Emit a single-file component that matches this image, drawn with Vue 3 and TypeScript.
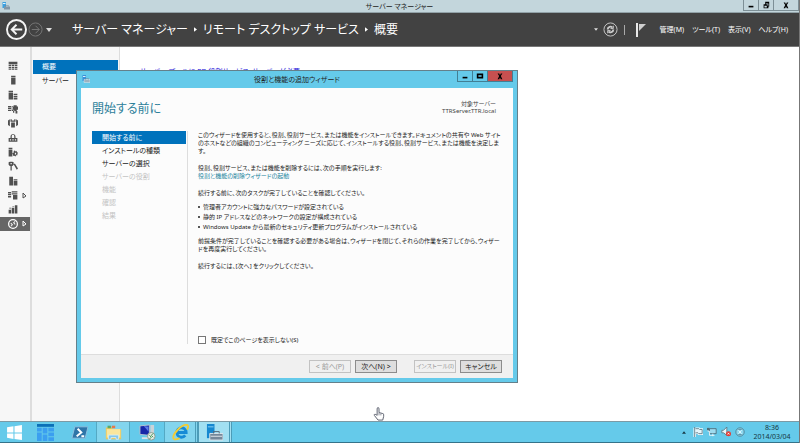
<script setup lang="ts">
import { ref } from 'vue'

interface RailItem {
  label: string
  path: string
  more?: boolean
  active?: boolean
}

const rail: RailItem[] = [
  { label: 'ダッシュボード', path: 'M1 1h14v4H1z M1 6h4v2H1z M6 6h4v2H6z M11 6h4v2h-4z M1 9h4v2H1z M6 9h4v2H6z M11 9h4v2h-4z M1 12h4v2H1z M6 12h4v2H6z M11 12h4v2h-4z' },
  { label: 'ローカル サーバー', path: 'M5 1h7v2H5z M5 4h7v11H5z' },
  { label: 'すべてのサーバー', path: 'M1 1h7v2H1z M1 4h7v11H1z M9 6h6v2H9z M9 9h6v2H9z M9 12h6v3H9z' },
  { label: 'AD CS', path: 'M0 3h5v2H0z M0 6h5v2H0z M0 9h5v2H0z M6 3h2v8H6z M9 2h5v2h2v5h-2v2H9V9H7V4h2z M8 10h2v4H8z M12 11h3v4h-3z' },
  { label: 'AD DS', path: 'M0 4l3-2v11l-3-2z M16 4l-3-2v11l3-2z M4 2h2v2h4V2h2v4H4z M5 7h6v8H5z' },
  { label: 'DHCP', path: 'M4 6c0-6 8-6 8 0v2h3v6H1V8h3z M6 5v3h4V5c0-3-4-3-4 0z M3 10v2h2v-2z M7 10v2h2v-2z M11 10v2h2v-2z' },
  { label: 'DNS', path: 'M1 1h6v2H1z M1 4h6v11H1z M11 5l1 2 2-1 0 2 2 1-1 2 0 2-2 0-1 2-2-1-2 0 0-2-1-2 2-1 0-2z M11 9v3h2V9z' },
  { label: 'IIS', path: 'M1 2l2-1h4l2 1v4L7 8H6v7H4V8H3L1 6z M4 3v2h2V3z M9 5l2-1 5 8-2 2z' },
  { label: 'WSUS', path: 'M2 1h6v14H2z M9 5h6v2H9z M9 8h6v7H9z' },
  { label: 'ファイル サービスと記憶域サービス', path: 'M0 3h5v2H0z M0 6h5v2H0z M0 9h5v3H0z M6 2h9v2H6z M6 5h9v2H6z M8 8h7v7H8z', more: true },
  { label: '印刷サービス', path: 'M1 9h4v6H1z M6 6h4v9H6z M11 2h4v13h-4z M7 3h3v1H7z M2 6h3v1H2z' },
  { label: 'リモート デスクトップ サービス', path: 'M8 0a8 8 0 1 0 0 16A8 8 0 0 0 8 0z M8 2a6 6 0 1 1 0 12A6 6 0 0 1 8 2z M5 6l3 3-3 3-1-1 2-2-2-2z M11 3L8 6l3 3 1-1-2-2 2-2z', more: true, active: true },
]

const steps = [
  { label: '開始する前に', state: 'active' },
  { label: 'インストールの種類', state: 'open' },
  { label: 'サーバーの選択', state: 'open' },
  { label: 'サーバーの役割', state: 'locked' },
  { label: '機能', state: 'locked' },
  { label: '確認', state: 'locked' },
  { label: '結果', state: 'locked' },
]

const menus = ['管理(M)', 'ツール(T)', '表示(V)', 'ヘルプ(H)']
const skipPage = ref(false)
</script>

<template>
  <div class="desktop">
    <header class="titlebar">
      <svg class="app-icon" viewBox="0 0 16 16"><path d="M1 0h7v12H1z" fill="#3aa0e0" /><path d="M2 2h5v2H2z" fill="#d8f0ff" /><path d="M4 9h12v6H4z" fill="#8296a6" /><path d="M7 9V7h6v2" fill="none" stroke="#708494" /></svg>
      <span class="app-title">サーバー マネージャー</span>
      <div class="win-buttons">
        <button type="button" aria-label="最小化"><svg viewBox="0 0 10 10"><path d="M2 6h6v2H2z" /></svg></button>
        <button type="button" aria-label="元に戻す"><svg viewBox="0 0 10 10"><path d="M4 1h5v6H8v2H2V4h2zM5 3v1h2v2h1V3zM3 6v2h3V6z" fill-rule="evenodd" /></svg></button>
        <button type="button" class="wide" aria-label="閉じる"><svg viewBox="0 0 10 10"><path d="M2 2h2l1 2 1-2h2L6 5l2 4H6L5 7 4 9H2l2-4z" /></svg></button>
      </div>
    </header>

    <nav class="banner">
      <button type="button" class="plain" aria-label="戻る"><svg class="back" viewBox="0 0 22 22"><circle cx="11" cy="11" r="10" /><path d="M17 11H6M11 6l-5 5 5 5" /></svg></button>
      <button type="button" class="plain" aria-label="進む"><svg class="forward" viewBox="0 0 16 16"><circle cx="8" cy="8" r="7" /><path d="M4 8h8M8 4l4 4-4 4" /></svg></button>
      <svg class="caret" viewBox="0 0 6 4"><path d="M0 0h6L3 4z" /></svg>
      <h1 class="crumbs">
        <span>サーバー マネージャー</span><svg viewBox="0 0 4 6"><path d="M0 0l4 3-4 3z" /></svg>
        <span>リモート デスクトップ サービス</span><svg viewBox="0 0 4 6"><path d="M0 0l4 3-4 3z" /></svg>
        <span>概要</span>
      </h1>
      <svg class="caret small" viewBox="0 0 6 4"><path d="M0 0h6L3 4z" /></svg>
      <button type="button" class="plain" aria-label="更新"><svg class="refresh" viewBox="0 0 16 16"><circle cx="8" cy="8" r="7" /><path d="M5 8c0-3 4-4 5-2M11 8c0 3-4 4-5 2" stroke-width="2" /><path d="M11 4v3H8M5 12V9h3" /></svg></button>
      <span class="bar"></span>
      <button type="button" class="plain" aria-label="通知"><svg class="flag" viewBox="0 0 10 14"><path d="M0 0h2v14H0z" fill="#e8e8e8" /><path d="M3 1h7L7 4 3 8z" fill="#cfcfcf" /></svg></button>
      <div class="menus"><button v-for="m in menus" :key="m" type="button" class="plain">{{ m }}</button></div>
    </nav>

    <main class="body">
      <nav class="rail">
        <a v-for="item in rail" :key="item.label" href="#" :aria-label="item.label" :class="{ active: item.active }">
          <svg class="rail-icon" viewBox="0 0 16 16"><path :d="item.path" fill-rule="evenodd" /></svg>
          <svg v-if="item.more" class="more" viewBox="0 0 5 7"><path d="M1 1l3 3-3 2z" /></svg>
        </a>
      </nav>
      <nav class="side">
        <a href="#" class="active">概要</a>
        <a href="#">サーバー</a>
      </nav>
      <section class="content"><p class="notice">サーバー プールに RD 役割サービス、サーバーが必要</p></section>
    </main>

    <section class="dialog" role="dialog" aria-labelledby="wizard-title">
      <header class="dialog-bar">
        <svg class="app-icon" viewBox="0 0 16 16"><path d="M1 0h7v12H1z" fill="#3a90d8" /><path d="M2 2h5v2H2z" fill="#d8f0ff" /><path d="M4 9h12v6H4z" fill="#9eb2c0" stroke="#dfeaf0" /><path d="M7 9V7h6v2" fill="none" stroke="#708494" /></svg>
        <h2 id="wizard-title">役割と機能の追加ウィザード</h2>
        <div class="win-buttons">
          <button type="button" aria-label="最小化"><svg viewBox="0 0 10 10"><path d="M2 6h6v2H2z" /></svg></button>
          <button type="button" aria-label="最大化"><svg viewBox="0 0 10 10"><path d="M1 2h8v6H1zM3 4v2h4V4z" fill-rule="evenodd" /></svg></button>
          <button type="button" class="wide close" aria-label="閉じる"><svg viewBox="0 0 10 10"><path d="M2 2h2l1 2 1-2h2L6 5l2 4H6L5 7 4 9H2l2-4z" /></svg></button>
        </div>
      </header>
      <div class="page">
        <div class="page-head">
          <h3>開始する前に</h3>
          <p>対象サーバー<br />TTRServer.TTR.local</p>
        </div>
        <div class="page-body">
          <ol class="steps"><li v-for="s in steps" :key="s.label" :class="s.state">{{ s.label }}</li></ol>
          <div class="text">
            <p>このウィザードを使用すると、役割、役割サービス、または機能をインストールできます。ドキュメントの共有や Web サイト<br />のホストなどの組織のコンピューティング ニーズに応じて、インストールする役割、役割サービス、または機能を決定しま<br />す。</p>
            <p>役割、役割サービス、または機能を削除するには、次の手順を実行します:<br /><a href="#">役割と機能の削除ウィザードの起動</a></p>
            <p>続行する前に、次のタスクが完了していることを確認してください。</p>
            <ul>
              <li>管理者アカウントに強力なパスワードが設定されている</li>
              <li>静的 IP アドレスなどのネットワークの設定が構成されている</li>
              <li>Windows Update から最新のセキュリティ更新プログラムがインストールされている</li>
            </ul>
            <p>前提条件が完了していることを確認する必要がある場合は、ウィザードを閉じて、それらの作業を完了してから、ウィザー<br />ドを再度実行してください。</p>
            <p>続行するには、[次へ] をクリックしてください。</p>
            <label class="skip"><input v-model="skipPage" type="checkbox" />既定でこのページを表示しない(S)</label>
          </div>
        </div>
      </div>
      <footer class="actions">
        <button type="button" disabled>&lt; 前へ(P)</button>
        <button type="button">次へ(N) &gt;</button>
        <button type="button" class="apart" disabled>インストール(I)</button>
        <button type="button">キャンセル</button>
      </footer>
    </section>

    <svg class="pointer" viewBox="0 0 12 15"><path d="M4 9V2c0-2 2-2 2 0v4l4 1c1 0 1 1 1 3l-1 4H5L1 9c-1-1 1-2 3 0z" fill="#fff" stroke="#555a68" /><path d="M8 7v2M6 6v3" stroke="#8a8e9a" /></svg>

    <footer class="taskbar">
      <button type="button" class="task start" aria-label="スタート"><svg viewBox="0 0 16 16"><path d="M1 3l6-1v6H1zM8 2l7-1v7H8zM1 9h6v5l-6-1zM8 9h7v6l-7-1z" fill="#fff" /></svg></button>
      <button type="button" class="task" aria-label="サーバー マネージャー"><svg viewBox="0 0 18 18"><path d="M0 0h18v3H0z" fill="#0b70b8" /><path d="M0 4h5v4H0zM6 4h5v6H6zM12 4h6v4h-6zM0 9h5v9H0zM6 11h5v7H6zM12 9h6v4h-6zM12 14h6v4h-6z" fill="#3b9ff0" /></svg></button>
      <button type="button" class="task" aria-label="PowerShell"><svg viewBox="0 0 18 18"><path d="M4 3h14l-3 12H1z" fill="#2e75a8" stroke="#8fc2e0" /><path d="M7 5l4 4-5 4M11 13h3" fill="none" stroke="#fff" stroke-width="2" /></svg></button>
      <button type="button" class="task running" aria-label="エクスプローラー"><svg viewBox="0 0 20 18"><path d="M1 3h7l1 2h10v12H1z" fill="#e9c75c" /><path d="M3 1h4v3H3z" fill="#5aaa6a" /><path d="M8 1h4v3H8z" fill="#e27a4a" /><path d="M2 5h16v10H2z" fill="#fae69c" /><path d="M4 17v-5h12v5h-3v-2H7v2z" fill="#84c8ec" stroke="#d7eef8" /></svg></button>
      <button type="button" class="task" aria-label="リモート デスクトップ"><svg viewBox="0 0 18 18"><path d="M1 2l10-1v11L1 11z" fill="#1727a8" stroke="#b9c4cf" /><path d="M5 2l5 1v5z" fill="#5a7be8" /><path d="M12 1h4v13h-4z" fill="#cbd3d8" /><path d="M3 14h8v2H3z" fill="#dbe3e8" /><circle cx="13" cy="13" r="4" fill="#e4ebe6" stroke="#8b9c92" /><path d="M11 12l2 2-2 2M15 10l-2 2 2 2" fill="none" stroke="#3c9350" /></svg></button>
      <button type="button" class="task running stacked" aria-label="Internet Explorer"><svg viewBox="0 0 18 18"><path d="M14 12a5 5 0 1 1 1-3H5" fill="none" stroke="#168bd6" stroke-width="3" /><path d="M2 16C-1 12 10 0 16 1c2 1 1 3 0 5" fill="none" stroke="#f2cc36" stroke-width="2" /><path d="M2 16c2 1 4 0 6-1" fill="none" stroke="#f2cc36" stroke-width="2" /></svg></button>
      <button type="button" class="task current stacked" aria-label="追加ウィザード"><svg viewBox="0 0 18 18"><path d="M1 0h8v15H1z" fill="#1688d0" /><path d="M2 3h6" stroke="#8ad0f4" /><path d="M4 10h14v7H4z" fill="#75889a" stroke="#dfe9ee" /><path d="M8 10V8h6v2" fill="none" stroke="#566878" /><path d="M5 13h12" stroke="#e1e8ed" /></svg></button>
      <div class="tray">
        <svg class="up" viewBox="0 0 6 4"><path d="M0 4h6L3 0z" fill="#173844" /></svg>
        <svg viewBox="0 0 12 12"><path d="M2 1v11M3 2h4l1 1h3v5H7L6 7H3" fill="none" stroke="#eefaff" stroke-width="3" /><path d="M2 0v12M3 2h4l1 1h3v5H7L6 7H3" fill="#e4f6fb" stroke="#58737f" /></svg>
        <svg viewBox="0 0 12 12"><path d="M3 2h8v6H3z" fill="#9edcf0" stroke="#496674" /><path d="M1 1v4h2v5h6M7 8v3" fill="none" stroke="#f0fbff" /><path d="M0 1h3v3H0z" fill="#526d78" /></svg>
        <svg viewBox="0 0 12 12"><path d="M1 4h2l4-4v10L3 7H1z" fill="#e9f7fb" stroke="#58737f" /><circle cx="9" cy="8" r="3" fill="#e23d35" /><path d="M8 7l2 2M10 7L8 9" stroke="#fff" /></svg>
        <svg viewBox="0 0 12 12"><circle cx="6" cy="6" r="5" fill="#8cd8ef" stroke="#48788a" /><path d="M4 4l4 4M8 4L4 8" stroke="#eafaff" /><path d="M4 3h4M4 9h4" stroke="#5b8798" /></svg>
      </div>
      <time class="clock">8:36<br />2014/03/04</time>
    </footer>
  </div>
</template>

<style>
body {
  margin: 0;
}
</style>

<style scoped>
* {
  box-sizing: border-box;
}
.desktop {
  position: relative;
  display: flex;
  flex-direction: column;
  min-height: 100vh;
  overflow: hidden;
  border-right: 1px solid #777;
  background: #fff;
  color: #222;
  font-family: "Noto Sans", "Noto Sans CJK JP", sans-serif;
  font-feature-settings: "palt";
  font-size: 7px;
  line-height: 8px;
}
h1, h2, h3, p, ol, ul {
  margin: 0;
  padding: 0;
  font-weight: 400;
}
ol {
  list-style: none;
}
svg {
  display: block;
  flex: none;
}
a {
  color: inherit;
  text-decoration: none;
}
button {
  margin: 0;
  padding: 0;
  border: 0;
  background: none;
  color: inherit;
  font: inherit;
  font-feature-settings: inherit;
  white-space: nowrap;
}
.titlebar {
  display: grid;
  grid-template-columns: 1fr auto 1fr;
  height: 13px;
  border-bottom: 1px solid #92a2a8;
  background: #c3d6dc;
}
.app-icon {
  width: 8px;
  height: 8px;
  margin: 2px;
}
.app-title {
  line-height: 13px;
}
.win-buttons {
  display: flex;
  justify-self: end;
  height: 11px;
  border: 1px solid #7d8f96;
  border-top: 0;
}
.win-buttons button {
  display: grid;
  place-items: center;
  width: 15px;
  border-right: 1px solid #7d8f96;
}
.win-buttons .wide {
  width: 24px;
  border-right: 0;
}
.win-buttons svg {
  width: 8px;
  height: 8px;
}
.banner {
  display: flex;
  align-items: center;
  height: 34px;
  padding: 0 11px 0 6px;
  border-bottom: 1px solid #777;
  background: #424242;
  color: #fff;
}
.banner svg {
  fill: none;
  stroke: #ddd;
}
.banner .back {
  width: 21px;
  height: 21px;
  stroke: #f4f4f4;
  stroke-width: 2;
}
.banner .forward {
  width: 15px;
  height: 15px;
  margin-left: 1px;
  stroke: #777;
}
.banner .caret {
  width: 6px;
  height: 4px;
  margin-left: 3px;
  fill: #ddd;
  stroke: none;
}
.banner .caret.small {
  width: 4px;
  height: 3px;
  margin: 0 5px 0 auto;
}
.crumbs {
  display: flex;
  align-items: center;
  gap: 6px;
  margin-left: 20px;
  font-size: 12px;
  line-height: 20px;
  white-space: nowrap;
}
.banner .crumbs svg {
  width: 3px;
  height: 5px;
  fill: #fff;
  stroke: none;
}
.banner .refresh {
  width: 15px;
  height: 15px;
  stroke: #ccc;
}
.bar {
  width: 1px;
  height: 10px;
  margin: 0 11px 0 6px;
  background: #aaa;
}
.banner .flag {
  width: 10px;
  height: 14px;
  stroke: none;
}
.menus {
  display: flex;
  gap: 8px;
  margin-left: 14px;
}
.body {
  display: flex;
  flex: 1;
  background: linear-gradient(90deg, #f7f7f7 119px, #ddd 119px, #ddd 120px, #fff 120px);
}
.rail {
  display: grid;
  grid-template-rows: repeat(12, 1fr);
  width: 30px;
  height: 172px;
  margin-top: 12px;
  color: #505050;
}
.rail a {
  display: flex;
  align-items: center;
  gap: 4px;
  padding-left: 8px;
}
.rail a.active {
  background: #666;
  color: #fff;
}
.rail-icon {
  width: 10px;
  height: 10px;
  fill: currentColor;
}
.more {
  width: 5px;
  height: 7px;
  fill: none;
  stroke: currentColor;
}
.side {
  width: 90px;
  padding: 13px 2px 0 1px;
  border-left: 2px solid #ddd;
}
.side a {
  display: block;
  padding-left: 9px;
  line-height: 14px;
}
.side .active,
.steps .active {
  background: #0072bc;
  color: #fff;
}
.content {
  flex: 1;
  padding: 19px 20px 0;
}
.notice {
  height: 4px;
  overflow: hidden;
  color: #1a10d8;
  line-height: 12px;
}
.dialog {
  position: absolute;
  top: 70px;
  left: 76px;
  display: flex;
  flex-direction: column;
  width: 442px;
  padding: 0 4px 4px;
  border: 1px solid #64808b;
  background: #65caea;
}
.dialog-bar {
  display: grid;
  grid-template-columns: 1fr auto 1fr;
  height: 17px;
}
.dialog-bar .app-icon {
  margin: 4px 0 0 1px;
}
.dialog-bar h2 {
  font-size: 7px;
  line-height: 17px;
}
.dialog-bar .win-buttons {
  border-color: #427f94;
}
.dialog-bar .win-buttons button {
  border-color: #427f94;
}
.dialog-bar .close {
  background: #c75050;
}
.page {
  background: #fcfcfc;
}
.page-head {
  display: flex;
  justify-content: space-between;
  align-items: flex-start;
  height: 43px;
  padding: 13px 17px 0 11px;
}
.page-head h3 {
  color: #2c809a;
  font-size: 12px;
  line-height: 16px;
}
.page-head p {
  color: #444;
  font-size: 6px;
  line-height: 7px;
  text-align: right;
}
.page-body {
  display: flex;
  padding: 0 8px 10px 11px;
}
.steps {
  width: 96px;
  padding-right: 1px;
  border-right: 1px solid #ddd;
}
.steps li {
  padding-left: 10px;
  line-height: 13px;
}
.steps .locked {
  color: #c4c4c4;
}
.text {
  flex: 1;
  padding-left: 10px;
  white-space: nowrap;
  font-size: 6px;
}
.text p + p {
  margin-top: 9px;
}
.text a {
  color: #21839c;
}
.text ul {
  margin: 5px 0;
  padding-left: 5px;
  line-height: 10px;
}
.text li {
  list-style: none;
}
.text li::before {
  content: "";
  float: left;
  width: 2px;
  height: 2px;
  margin: 4px 0 0 -5px;
  border-radius: 1px;
  background: #222;
}
.skip {
  display: flex;
  align-items: center;
  gap: 5px;
  margin-top: 66px;
}
.skip input {
  appearance: none;
  width: 8px;
  height: 8px;
  margin: 0;
  border: 1px solid #777;
  background: #fff;
}
.actions {
  display: flex;
  justify-content: flex-end;
  align-items: center;
  gap: 4px;
  height: 24px;
  padding-right: 11px;
  border-top: 1px solid #ddd;
  background: #f0f0f0;
}
.actions button {
  width: 42px;
  height: 13px;
  border: 1px solid #8c8c8c;
  background: #dedede;
  line-height: 11px;
}
.actions button:disabled {
  border-color: #c2c2c2;
  background: #f0f0f0;
  color: #999;
}
.actions .apart {
  margin-left: 13px;
  font-size: 6px;
}
.pointer {
  position: absolute;
  top: 407px;
  left: 373px;
  width: 12px;
  height: 14px;
}
.taskbar {
  display: flex;
  height: 22px;
  border-top: 1px solid #7c9aa5;
  border-bottom: 1px solid #35738a;
  background: #65caea;
}
.task {
  display: grid;
  place-items: center;
  width: 34px;
}
.task svg {
  width: 17px;
  height: 17px;
}
.task.start {
  width: 28px;
}
.task.running {
  border: 1px solid #54a9c4;
  border-width: 0 1px;
  background: #83d5ee;
}
.task.current {
  border: 1px solid #4c9cb8;
  border-width: 0 1px;
  background: #a2e0f2;
}
.task.stacked {
  border-right: 3px double #4c9cb8;
}
.tray {
  display: flex;
  align-items: center;
  gap: 4px;
  margin-left: auto;
}
.tray svg {
  width: 10px;
  height: 10px;
}
.tray .up {
  width: 4px;
  height: 3px;
  margin-right: 3px;
}
.clock {
  width: 54px;
  padding-top: 1px;
  color: #173844;
  line-height: 9px;
  text-align: center;
}
</style>
